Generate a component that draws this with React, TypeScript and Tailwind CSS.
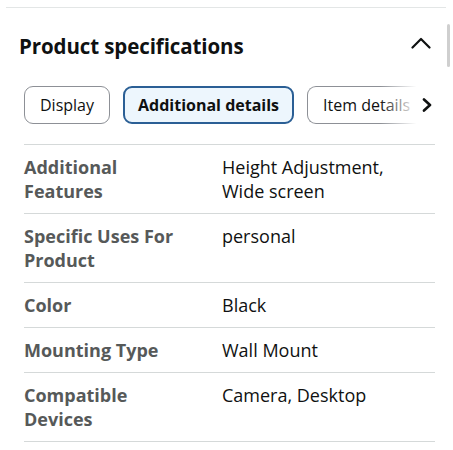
import React from 'react';

const rows: { label: string; value: string; tall?: boolean }[] = [
  { label: 'Additional Features', value: 'Height Adjustment, Wide screen', tall: true },
  { label: 'Specific Uses For Product', value: 'personal', tall: true },
  { label: 'Color', value: 'Black' },
  { label: 'Mounting Type', value: 'Wall Mount' },
  { label: 'Compatible Devices', value: 'Camera, Desktop', tall: true },
];

export default function App() {
  return (
    <div className="w-[453px] h-[450px] bg-white relative overflow-hidden" style={{ fontFamily: '"Open Sans", Arial, sans-serif' }}>
      {/* scrollbar */}
      <div className="absolute right-[3px] top-[24px] w-[3px] h-[43px] rounded-full bg-[#cfcfcf]" />

      <div className="pt-[7px] px-[6px]">
        <div className="h-px bg-[#e3e6e6] mr-[1px]" />
      </div>

      {/* Header */}
      <div className="flex items-center justify-between pl-[19px] pr-[22px] h-[78px] pb-[2px]">
        <h2 className="text-[20.5px] font-bold text-[#0f1111] tracking-[-0.1px]">Product specifications</h2>
        <svg width="20" height="12" viewBox="0 0 20 12" fill="none" className="mb-[6px]">
          <path d="M1.5 10.5 L10 2 L18.5 10.5" stroke="#0f1111" strokeWidth="2.2" strokeLinecap="round" strokeLinejoin="round" />
        </svg>
      </div>

      {/* Tabs */}
      <div className="flex items-center gap-[13px] pl-[24px] h-[38px] relative">
        <div className="h-[38px] px-[15px] flex items-center rounded-[9px] border border-[#8d9096] text-[16px] text-[#0f1111]">Display</div>
        <div className="h-[38px] px-[13px] flex items-center rounded-[9px] border-[2.5px] border-[#2b5f95] bg-[#edf6fd] text-[16px] font-bold text-[#0f1111]">Additional details</div>
        <div className="h-[38px] pl-[15px] w-[140px] flex items-center rounded-l-[9px] border border-r-0 border-[#8d9096] text-[16px] text-[#0f1111] whitespace-nowrap overflow-hidden">Item details</div>
        <div className="absolute left-[380px] top-0 h-[38px] w-[73px] flex items-center bg-gradient-to-r from-white/0 via-white to-white">
          <svg width="10" height="14" viewBox="0 0 10 14" fill="none" className="ml-[42px]">
            <path d="M2 1.5 L8 7 L2 12.5" stroke="#0f1111" strokeWidth="2.6" strokeLinecap="round" strokeLinejoin="round" />
          </svg>
        </div>
      </div>

      {/* Table */}
      <div className="mt-[20px] ml-[24px] w-[411px] border-t border-[#d5d9d9]">
        {rows.map((r) => (
          <div key={r.label} className={`flex border-b border-[#d5d9d9] ${r.tall ? 'h-[69px]' : 'h-[45px]'} pt-[10px]`}>
            <div className="w-[198px] shrink-0">
              <div className="max-w-[165px] text-[18px] leading-[24px] font-bold text-[#565959]">{r.label}</div>
            </div>
            <div className="flex-1 text-[18px] leading-[24px] text-[#0f1111] pr-[20px]">{r.value}</div>
          </div>
        ))}
      </div>
    </div>
  );
}
